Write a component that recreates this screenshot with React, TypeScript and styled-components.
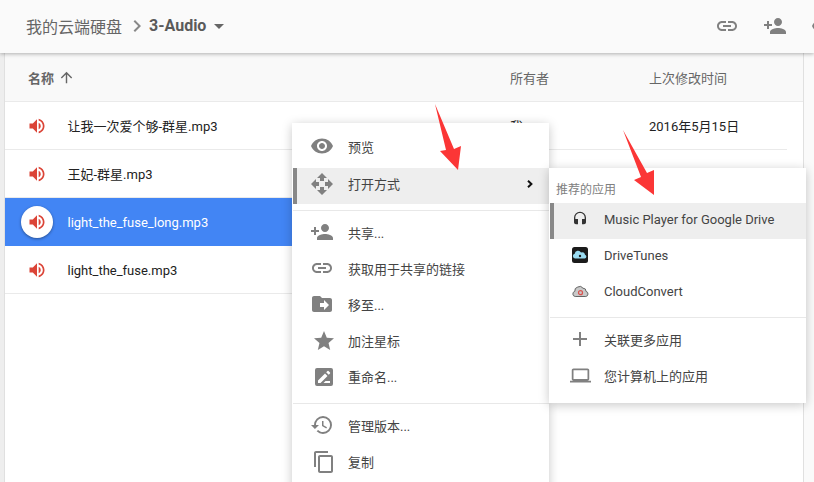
import React from "react";
import styled, { createGlobalStyle } from "styled-components";
import {
  MdAdd,
  MdArrowDropDown,
  MdArrowUpward,
  MdChevronRight,
  MdContentCopy,
  MdDriveFileMove,
  MdHeadset,
  MdHistory,
  MdLaptop,
  MdLink,
  MdOpenWith,
  MdPersonAdd,
  MdStar,
  MdVisibility,
  MdVolumeUp,
} from "react-icons/md";

const GlobalStyle = createGlobalStyle`
  html, body {
    margin: 0;
    padding: 0;
    background: #fff;
    font-family: Roboto, "Noto Sans CJK SC", sans-serif;
  }
`;

const Page = styled.div`
  position: relative;
  display: flex;
  flex-direction: column;
  width: 814px;
  height: 482px;
  overflow: hidden;
`;

const Header = styled.header`
  position: relative;
  z-index: 2;
  flex: 0 0 53px;
  display: flex;
  align-items: center;
  padding: 0 0 2px 26px;
  box-sizing: border-box;
  background: #fafafa;
  box-shadow: 0 1px 4px rgba(0, 0, 0, 0.3);
  color: #5f6368;
`;

const Crumb = styled.span`
  font-size: 16px;
  color: #666;
`;

const CrumbSep = styled(MdChevronRight)`
  margin: 0 3px 0 3px;
  font-size: 24px;
  color: #888;
`;

const CurrentFolder = styled.span`
  margin-left: -3px;
  font-size: 16px;
  font-weight: 700;
  color: #5a5a5a;
`;

const FolderCaret = styled(MdArrowDropDown)`
  font-size: 24px;
  margin-left: 1px;
  color: #666;
`;

const HeaderTools = styled.div`
  margin-left: auto;
  margin-right: -21px;
  display: flex;
  gap: 24px;
  font-size: 24px;
  color: #808080;

  svg {
    display: block;
  }
`;

const Body = styled.div`
  flex: 1;
  display: flex;
  min-height: 0;
`;

const Gutter = styled.div`
  flex: 0 0 4px;
  background: #eee;
  border-right: 1px solid #e0e0e0;
`;

const Rail = styled.div`
  flex: 0 0 10px;
  background: #fafafa;
  border-left: 1px solid #e0e0e0;
`;

const Main = styled.main`
  flex: 1;
  min-width: 0;
`;

const ListHead = styled.div`
  display: grid;
  grid-template-columns: 505px 139px 1fr;
  align-items: center;
  height: 48px;
  background: #f9f9f9;
  border-bottom: 1px solid #eaeaea;
  font-size: 13px;
  color: #666;
`;

const NameHead = styled.div`
  display: flex;
  align-items: center;
  gap: 4px;
  padding-left: 23px;
  font-weight: 700;

  svg {
    font-size: 17px;
  }
`;

const Row = styled.div<{ $selected?: boolean }>`
  display: grid;
  grid-template-columns: 505px 139px 1fr;
  align-items: center;
  height: 47px;
  margin-right: ${(p) => (p.$selected ? "0" : "16px")};
  border-bottom: 1px solid ${(p) => (p.$selected ? "#4285f4" : "#eaeaea")};
  background: ${(p) => (p.$selected ? "#4285f4" : "#fff")};
  font-size: 13px;
  line-height: 20px;
  color: ${(p) => (p.$selected ? "#fff" : "#222")};
`;

const NameCell = styled.div`
  display: flex;
  align-items: center;
`;

const CellText = styled.div`
  padding-top: 2px;
`;

const FileBadge = styled.span<{ $selected?: boolean }>`
  display: flex;
  align-items: center;
  justify-content: center;
  flex: none;
  width: 32px;
  height: 32px;
  margin: 0 14.5px 0 16px;
  border-radius: 50%;
  font-size: 20px;
  color: #db4437;
  background: ${(p) => (p.$selected ? "#fff" : "transparent")};
  box-shadow: ${(p) => (p.$selected ? "0 1px 3px rgba(0,0,0,.4)" : "none")};
`;

const Menu = styled.div`
  position: absolute;
  z-index: 3;
  left: 292px;
  top: 123px;
  width: 257px;
  height: 380px;
  padding: 6px 0 0 1px;
  box-sizing: border-box;
  background: #fff;
  box-shadow: 0 2px 10px rgba(0, 0, 0, 0.22);

  > :first-child {
    margin-bottom: 3px;
  }
`;

const SubMenu = styled.div`
  position: absolute;
  z-index: 4;
  left: 549px;
  top: 168px;
  width: 257px;
  height: 235px;
  padding-left: 1px;
  box-sizing: border-box;
  background: #fff;
  box-shadow: 0 2px 10px rgba(0, 0, 0, 0.22);
`;

const SubTitle = styled.div`
  height: 35px;
  padding: 14px 0 0 6px;
  box-sizing: border-box;
  font-size: 12px;
  line-height: 16px;
  color: #808080;
`;

const Item = styled.div<{ $active?: boolean; $sub?: boolean; $lift?: number }>`
  display: flex;
  align-items: center;
  gap: ${(p) => (p.$sub ? "12px" : "14px")};
  height: 36px;
  padding-left: ${(p) => (p.$sub ? "14px" : "13px")};
  padding-bottom: ${(p) => p.$lift ?? 2}px;
  box-sizing: border-box;
  border-left: 4px solid ${(p) => (p.$active ? "#888" : "transparent")};
  background: ${(p) => (p.$active ? "#eee" : "transparent")};
  font-size: 13px;
  color: #444;
`;

const ItemIcon = styled.span<{ $nudge?: boolean; $small?: boolean }>`
  display: flex;
  align-items: center;
  justify-content: center;
  flex: none;
  width: 24px;
  height: 24px;
  font-size: ${(p) => (p.$small ? "21px" : "24px")};
  color: #808080;
  transform: ${(p) => (p.$nudge ? "translate(2px, 1px)" : "none")};
`;

const HeadsetIcon = styled(MdHeadset)`
  font-size: 16px;
  color: #333;
`;

const MoreArrow = styled.svg`
  margin-left: auto;
  margin-right: 16px;
`;

const Divider = styled.div<{ $top: number; $bottom: number }>`
  height: 1px;
  margin: ${(p) => p.$top}px 0 ${(p) => p.$bottom}px;
  background: #e8e8e8;
`;

const Callouts = styled.svg`
  position: absolute;
  z-index: 5;
  left: 0;
  top: 0;
  pointer-events: none;
`;

const RenameIcon = () => (
  <svg width="24" height="24" viewBox="0 0 24 24" fill="currentColor">
    <path
      fillRule="evenodd"
      d="M5 3h14a2 2 0 0 1 2 2v14a2 2 0 0 1-2 2H5a2 2 0 0 1-2-2V5a2 2 0 0 1 2-2zm1 15h2.5l7-7L13 8.5l-7 7V18zm8.2-10.7 2.5 2.5 1.3-1.3a.7.7 0 0 0 0-1l-1.5-1.5a.7.7 0 0 0-1 0l-1.3 1.3zM11.5 18H18v-2h-4.5l-2 2z"
    />
  </svg>
);

const DriveTunesLogo = () => (
  <svg width="16" height="16" viewBox="0 0 16 16">
    <rect width="16" height="16" rx="2.5" fill="#1b1b1b" />
    <path
      d="M3 11.5a2.4 2.4 0 0 1-.3-4.7A3.4 3.4 0 0 1 9 5.4a2.9 2.9 0 0 1 4 2.4 1.9 1.9 0 0 1-.3 3.7H3z"
      fill="#9adcf2"
    />
    <circle cx="8" cy="9" r="1.2" fill="#1b1b1b" />
  </svg>
);

const CloudConvertLogo = () => (
  <svg width="17" height="14" viewBox="0 0 17 14">
    <path
      d="M3.2 12.5a2.6 2.6 0 0 1-.4-5.1 4 4 0 0 1 3-4.4 3.9 3.9 0 0 1 5.2 1.2 3 3 0 0 1 3 3.2 2.6 2.6 0 0 1-.2 5.1H3.2z"
      fill="#c9c9c9"
      stroke="#666"
    />
    <circle cx="8.5" cy="8.7" r="2" fill="none" stroke="#d9534f" strokeWidth="1.2" />
  </svg>
);

const files = [
  { name: "让我一次爱个够-群星.mp3", owner: "我", date: "2016年5月15日" },
  { name: "王妃-群星.mp3" },
  { name: "light_the_fuse_long.mp3", selected: true },
  { name: "light_the_fuse.mp3" },
];

const shareItems = [
  { icon: <MdPersonAdd />, label: "共享..." },
  { icon: <MdLink />, label: "获取用于共享的链接" },
  { icon: <MdDriveFileMove />, label: "移至..." },
  { icon: <MdStar />, label: "加注星标", nudge: true },
  { icon: <RenameIcon />, label: "重命名...", nudge: true },
];

const recommendedApps = [
  { icon: <HeadsetIcon />, label: "Music Player for Google Drive", active: true },
  { icon: <DriveTunesLogo />, label: "DriveTunes" },
  { icon: <CloudConvertLogo />, label: "CloudConvert" },
];

const App: React.FC = () => {
  return (
    <Page>
      <GlobalStyle />
      <Header>
        <Crumb>我的云端硬盘</Crumb>
        <CrumbSep />
        <CurrentFolder>3-Audio</CurrentFolder>
        <FolderCaret />
        <HeaderTools>
          <MdLink />
          <MdPersonAdd />
          <MdVisibility />
        </HeaderTools>
      </Header>
      <Body>
        <Gutter />
        <Main>
          <ListHead>
            <NameHead>
              名称 <MdArrowUpward />
            </NameHead>
            <div>所有者</div>
            <div>上次修改时间</div>
          </ListHead>
          {files.map((file) => (
            <Row key={file.name} $selected={file.selected}>
              <NameCell>
                <FileBadge $selected={file.selected}>
                  <MdVolumeUp />
                </FileBadge>
                <CellText>{file.name}</CellText>
              </NameCell>
              <CellText>{file.owner}</CellText>
              <CellText>{file.date}</CellText>
            </Row>
          ))}
        </Main>
        <Rail />
      </Body>

      <Menu>
        <Item>
          <ItemIcon>
            <MdVisibility />
          </ItemIcon>
          预览
        </Item>
        <Item $active $lift={5}>
          <ItemIcon>
            <MdOpenWith />
          </ItemIcon>
          打开方式
          <MoreArrow width="6" height="8" viewBox="0 0 6 8">
            <path d="M1 .8 4.4 4 1 7.2" fill="none" stroke="#111" strokeWidth="2" />
          </MoreArrow>
        </Item>
        <Divider $top={6} $bottom={4} />
        {shareItems.map((item) => (
          <Item key={item.label}>
            <ItemIcon $nudge={item.nudge}>{item.icon}</ItemIcon>
            {item.label}
          </Item>
        ))}
        <Divider $top={8} $bottom={4} />
        <Item>
          <ItemIcon>
            <MdHistory />
          </ItemIcon>
          管理版本...
        </Item>
        <Item>
          <ItemIcon $nudge>
            <MdContentCopy />
          </ItemIcon>
          复制
        </Item>
      </Menu>

      <SubMenu>
        <SubTitle>推荐的应用</SubTitle>
        {recommendedApps.map((app) => (
          <Item key={app.label} $sub $lift={4} $active={app.active}>
            <ItemIcon>{app.icon}</ItemIcon>
            {app.label}
          </Item>
        ))}
        <Divider $top={6} $bottom={4} />
        <Item $sub>
          <ItemIcon>
            <MdAdd />
          </ItemIcon>
          关联更多应用
        </Item>
        <Item $sub>
          <ItemIcon $small>
            <MdLaptop />
          </ItemIcon>
          您计算机上的应用
        </Item>
      </SubMenu>

      <Callouts width="814" height="482" viewBox="0 0 814 482">
        <polygon points="435,104 454,149 461,146 458,170 440,151 446,150" fill="#fb3636" />
        <polygon points="623,130 647,173 654,170 654,195 634,180 641,177" fill="#fb3636" />
      </Callouts>
    </Page>
  );
};

export default App;
